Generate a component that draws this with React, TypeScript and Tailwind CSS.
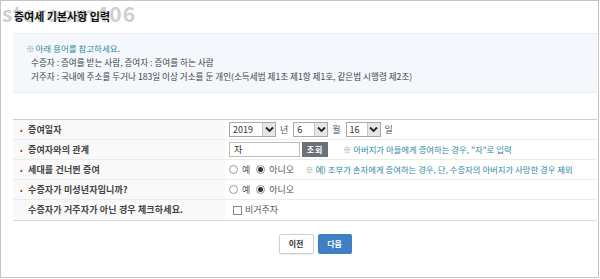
import React from 'react';

const font = { fontFamily: '"Noto Sans CJK KR", "Noto Sans", sans-serif' };

// small select box with a chevron button
const Select: React.FC<{ value: string; width: string }> = ({ value, width }) => (
  <div className={`flex h-[15px] ${width} items-center border border-[#a9a9a9] bg-white`}>
    <span className="flex-1 pl-[3px] text-[9px] leading-none text-[#333]">{value}</span>
    <span className="flex h-[13px] w-[13px] items-center justify-center border-l border-[#c5c5c5] bg-[#e6e6e6]">
      <svg width="9" height="7" viewBox="0 0 9 7">
        <path d="M1 1.5 L4.5 5 L8 1.5" fill="none" stroke="#222" strokeWidth="1.8" />
      </svg>
    </span>
  </div>
);

const Radio: React.FC<{ checked?: boolean; label: string }> = ({ checked, label }) => (
  <span className="flex items-center gap-[4px]">
    <span className="flex h-[9px] w-[9px] items-center justify-center rounded-full border border-[#999] bg-white">
      {checked && <span className="h-[5px] w-[5px] rounded-full bg-[#333]" />}
    </span>
    <span className="text-[9px] text-[#555]">{label}</span>
  </span>
);

const Row: React.FC<{ label: string; req?: boolean; children: React.ReactNode; last?: boolean }> = ({
  label,
  req = true,
  children,
  last,
}) => (
  <div className={`flex h-[20px] ${last ? '' : 'border-b border-[#ebebeb]'}`}>
    <div className="flex w-[212px] items-center bg-[#f9f9f9] pl-[7px]">
      <span className={`w-[8px] text-[8px] ${req ? 'text-[#c0392b]' : 'text-transparent'}`}>•</span>
      <span className="text-[9px] font-bold tracking-[0.15px] text-[#444]">{label}</span>
    </div>
    <div className="flex flex-1 items-center pl-[4px]">{children}</div>
  </div>
);

export default function App() {
  return (
    <div style={font} className="h-[279px] w-[600px] bg-white">
      <div className="relative h-[278px] w-[599px] border border-[#c4c4c4]">
        {/* watermark */}
        <div className="absolute left-[1px] top-[-3px] text-[21px] font-bold tracking-[1px] text-[#cfcfcf]">
          storoom406
        </div>

        <div className="relative pl-[13px] pt-[8px] text-[11px] font-bold leading-[14px] text-[#111]">
          증여세 기본사항 입력
        </div>

        {/* info box */}
        <div className="ml-[12px] mr-[1px] mt-[10px] h-[60px] border-t border-b border-[#e9edf2] bg-[#f4f7fc] pl-[13px] pt-[9px]">
          <div className="flex items-center text-[8.5px] leading-[10px] text-[#2f8aa0]">
            <span className="mr-[1px] text-[#999]">※</span>아래 용어를 참고하세요.
          </div>
          <div className="mt-[4px] pl-[5px] text-[8.6px] leading-[10px] text-[#444]">
            수증자 : 증여를 받는 사람, 증여자 : 증여를 하는 사람
          </div>
          <div className="mt-[4px] pl-[5px] text-[8.6px] leading-[10px] text-[#444]">
            거주자 : 국내에 주소를 두거나 183일 이상 거소를 둔 개인(소득세법 제1조 제1항 제1호, 같은법 시행령 제2조)
          </div>
        </div>

        {/* form table */}
        <div className="ml-[12px] mr-[1px] mt-[26px] border-t border-b border-t-[#cfcfcf] border-b-[#dcdcdc]">
          <Row label="증여일자">
            <div className="flex items-center gap-[4px] text-[9px] text-[#555]">
              <Select value="2019" width="w-[47px]" />
              <span className="mr-[1px]">년</span>
              <Select value="6" width="w-[35px]" />
              <span className="mr-[1px]">월</span>
              <Select value="16" width="w-[35px]" />
              <span>일</span>
            </div>
          </Row>
          <Row label="증여자와의 관계">
            <div className="flex items-center">
              <div className="flex h-[15px] w-[71px] items-center border border-[#bdbdbd] bg-white pl-[4px] text-[9px] text-[#333]">
                자
              </div>
              <div className="ml-[2px] flex h-[15px] w-[26px] items-center justify-center bg-[#6b7178] text-[8px] font-bold tracking-[1px] text-white">
                조회
              </div>
              <span className="ml-[15px] text-[8.4px] text-[#2f8aa0]">
                <span className="text-[#999]">※</span> 아버지가 아들에게 증여하는 경우, "자"로 입력
              </span>
            </div>
          </Row>
          <Row label="세대를 건너뛴 증여">
            <div className="flex items-center gap-[6px]">
              <Radio label="예" />
              <Radio checked label="아니오" />
              <span className="ml-[5px] text-[8.4px] text-[#2f8aa0]">
                <span className="text-[#999]">※</span> 예) 조부가 손자에게 증여하는 경우, 단, 수증자의 아버지가 사망한 경우 제외
              </span>
            </div>
          </Row>
          <Row label="수증자가 미성년자입니까?">
            <div className="flex items-center gap-[6px]">
              <Radio label="예" />
              <Radio checked label="아니오" />
            </div>
          </Row>
          <Row label="수증자가 거주자가 아닌 경우 체크하세요." req={false} last>
            <div className="flex items-center gap-[3px] pl-[4px]">
              <span className="h-[9px] w-[9px] border border-[#888] bg-white" />
              <span className="text-[9px] text-[#555]">비거주자</span>
            </div>
          </Row>
        </div>

        {/* buttons */}
        <div className="mt-[13px] flex justify-center gap-[4px] pl-[31px]">
          <button className="h-[20px] w-[35px] rounded-[2px] border border-[#d0d0d0] bg-white text-[8px] font-bold text-[#333] shadow-[0_1px_1px_rgba(0,0,0,0.08)]">
            이전
          </button>
          <button className="h-[20px] w-[34px] rounded-[2px] bg-[#3f7fc4] text-[8px] font-bold text-white">
            다음
          </button>
        </div>
      </div>
    </div>
  );
}
